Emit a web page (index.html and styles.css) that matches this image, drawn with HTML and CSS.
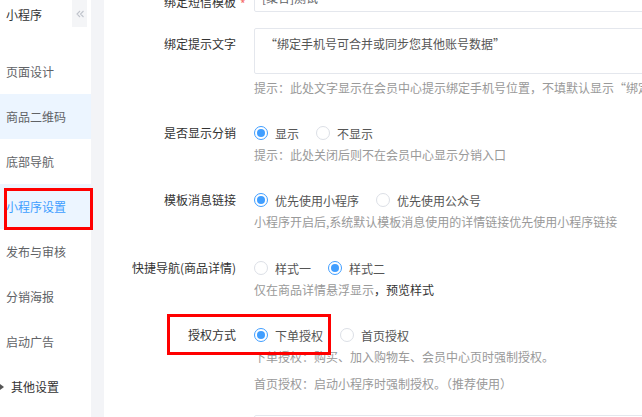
FILE: index.html
```html
<!DOCTYPE html>
<html lang="zh-CN">
<head>
<meta charset="utf-8">
<title>小程序设置</title>
<link rel="stylesheet" href="styles.css">
</head>
<body>
<div class="app">
  <aside class="sidebar">
    <div class="side-head">
      <span class="side-title">小程序</span>
      <span class="collapse"><svg width="8" height="8" viewBox="0 0 8 8"><path d="M4 1 L1 4 L4 7 M7.5 1 L4.5 4 L7.5 7" fill="none" stroke="#c0c4cc" stroke-width="1.1"/></svg></span>
    </div>
    <ul class="nav">
      <li class="nav-item">页面设计</li>
      <li class="nav-item hover">商品二维码</li>
      <li class="nav-item">底部导航</li>
      <li class="nav-item active">小程序设置</li>
      <li class="nav-item">发布与审核</li>
      <li class="nav-item">分销海报</li>
      <li class="nav-item">启动广告</li>
      <li class="nav-item group"><span class="caret"></span>其他设置</li>
    </ul>
  </aside>
  <div class="gutter"></div>
  <main class="main">
    <form class="form">
      <div class="item first">
        <div class="label pad6"><span class="req-wrap">绑定短信模板<span class="req">*</span></span></div>
        <div class="control"><div class="input">[聚合]测试</div></div>
      </div>
      <div class="item">
        <div class="label pad4">绑定提示文字</div>
        <div class="control">
          <div class="textarea">“绑定手机号可合并或同步您其他账号数据”</div>
          <p class="hint mt4">提示：此处文字显示在会员中心提示绑定手机号位置，不填默认显示“绑定手机号可合并或同步您其他账号数据”</p>
        </div>
      </div>
      <div class="item">
        <div class="label">是否显示分销</div>
        <div class="control">
          <div class="radio-group">
            <label class="radio checked"><span class="dot"></span>显示</label>
            <label class="radio"><span class="dot"></span>不显示</label>
          </div>
          <p class="hint">提示：此处关闭后则不在会员中心显示分销入口</p>
        </div>
      </div>
      <div class="item wide">
        <div class="label">模板消息链接</div>
        <div class="control">
          <div class="radio-group">
            <label class="radio checked"><span class="dot"></span>优先使用小程序</label>
            <label class="radio"><span class="dot"></span>优先使用公众号</label>
          </div>
          <p class="hint">小程序开启后,系统默认模板消息使用的详情链接优先使用小程序链接</p>
        </div>
      </div>
      <div class="item">
        <div class="label">快捷导航(商品详情)</div>
        <div class="control">
          <div class="radio-group">
            <label class="radio"><span class="dot"></span>样式一</label>
            <label class="radio checked"><span class="dot"></span>样式二</label>
          </div>
          <p class="hint">仅在商品详情悬浮显示<span class="dark">，预览样式</span></p>
        </div>
      </div>
      <div class="item tight">
        <div class="label">授权方式</div>
        <div class="control">
          <div class="radio-group">
            <label class="radio checked"><span class="dot"></span>下单授权</label>
            <label class="radio"><span class="dot"></span>首页授权</label>
          </div>
          <p class="hint">下单授权：购买、加入购物车、会员中心页时强制授权。</p>
          <p class="hint mt7">首页授权：启动小程序时强制授权。（推荐使用）</p>
        </div>
      </div>
      <div class="item">
        <div class="label short">小程序二维码生成链接</div>
        <div class="control"><div class="input tall"></div></div>
      </div>
    </form>
  </main>
</div>
<div class="mark mark-nav"></div>
<div class="mark mark-auth"></div>
</body>
</html>
```
FILE: styles.css
```css
* { box-sizing: border-box; margin: 0; padding: 0; }
html, body { width: 642px; height: 417px; overflow: hidden; background: #fff; }
body {
  font-family: "Noto Sans CJK SC", "Microsoft YaHei", sans-serif;
  font-size: 12px;
  color: #333;
  position: relative;
}
.app { display: flex; height: 417px; }

/* sidebar */
.sidebar { width: 91px; flex: none; background: #fff; }
.side-head { height: 49px; display: flex; align-items: flex-start; justify-content: space-between; }
.side-title { line-height: 30px; padding-left: 6px; color: #333; }
.collapse {
  width: 15px; height: 27px; margin-right: 4px;
  background: #f4f5f7;
  display: flex; align-items: center; justify-content: center;
}
.nav { list-style: none; }
.nav-item { height: 45px; line-height: 45px; padding-left: 6px; color: #606266; white-space: nowrap; }
.nav-item.hover { background: #ecf5ff; }
.nav-item.active { background: #ecf5ff; color: #409eff; }
.nav-item.group { padding-left: 0; color: #333; display: flex; align-items: center; }
.caret {
  width: 0; height: 0; margin-right: 7px;
  border-left: 4px solid #555;
  border-top: 3.5px solid transparent;
  border-bottom: 3.5px solid transparent;
}
.gutter { width: 13px; flex: none; background: #f3f4f7; }

/* main */
.main { flex: 1; overflow: hidden; background: #fff; }
.form { margin-top: -16px; }
.item { display: flex; align-items: flex-start; margin-bottom: 23px; }
.item.first { margin-bottom: 14px; }
.item.wide { margin-bottom: 24px; }
.item.tight { margin-bottom: 21px; }
.label {
  width: 150px; flex: none; padding-right: 18px;
  text-align: right; line-height: 24px; color: #333; white-space: nowrap;
}
.label.short { line-height: 16px; }
.pad6 { padding-top: 6px; }
.pad4 { padding-top: 4px; }
.req-wrap { position: relative; }
.req { position: absolute; left: 100%; top: -1px; margin-left: 4px; color: #f56c6c; }
.control { flex: none; width: 440px; }
.input {
  width: 440px; height: 28px; border: 1px solid #e4e7ed; border-radius: 2px;
  padding: 0 7px; line-height: 26px; color: #606266;
}
.input.tall { height: 32px; }
.textarea {
  width: 440px; height: 46px; border: 1px solid #e4e7ed; border-radius: 2px;
  padding: 5px 10px; line-height: 20px; color: #555; white-space: nowrap;
}
.hint { color: #999; line-height: 20px; white-space: nowrap; }
.hint .dark { color: #333; }
.mt4 { margin-top: 4px; }
.mt7 { margin-top: 7px; }

.radio-group { display: flex; align-items: center; height: 24px; }
.radio { display: flex; align-items: center; margin-right: 17px; color: #555; white-space: nowrap; }
.dot {
  width: 14px; height: 14px; margin-right: 7px; flex: none;
  border: 1px solid #dcdfe6; border-radius: 50%; background: #fff; position: relative;
}
.radio.checked .dot { border-color: #409eff; }
.radio.checked .dot::after {
  content: ""; position: absolute; left: 2px; top: 2px;
  width: 8px; height: 8px; border-radius: 50%; background: #409eff;
}

/* annotation boxes */
.mark { position: absolute; border: 3px solid #ff0000; }
.mark-nav { left: 4px; top: 188px; width: 89px; height: 42px; }
.mark-auth { left: 167px; top: 314px; width: 164px; height: 41px; }
```
